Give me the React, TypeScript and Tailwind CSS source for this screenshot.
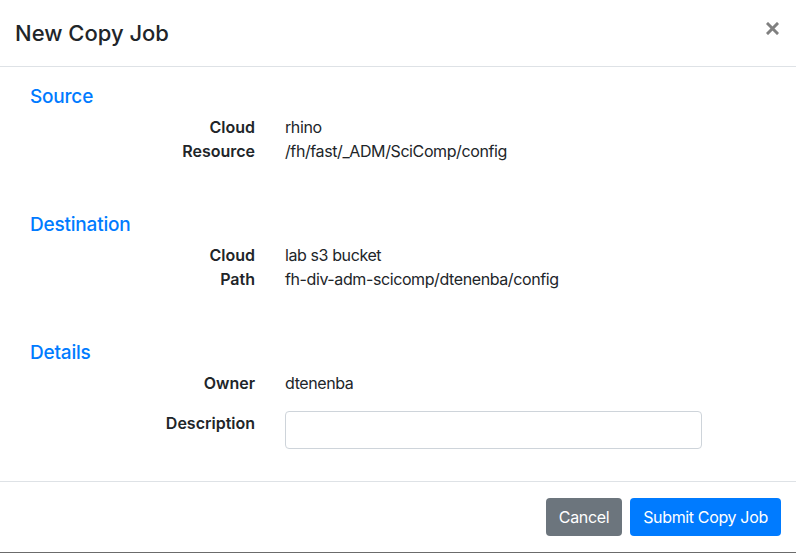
import React from "react";

function Row({ label, value }: { label: string; value: string }) {
  return (
    <div className="flex h-6 items-center">
      <div className="w-[225px] text-right font-semibold">{label}</div>
      <div className="ml-[30px] tracking-[-0.4px]">{value}</div>
    </div>
  );
}

function Heading({ children }: { children: React.ReactNode }) {
  return (
    <h5 className="h-6 pt-[1px] text-[19px] leading-6 font-medium text-[#007bff] tracking-[-0.2px]">{children}</h5>
  );
}

export default function App() {
  return (
    <div
      className="w-[796px] h-[553px] bg-white text-[#212529] text-[16px] leading-6 flex flex-col border-b border-[#6b6b6b]"
      style={{ fontFamily: "Inter, 'Noto Sans', sans-serif" }}
    >
      <div className="h-[67px] shrink-0 flex items-center justify-between pl-[15px] pr-[17px] border-b border-[#dee2e6]">
        <h4 className="text-[22px] font-medium leading-[30px]">New Copy Job</h4>
        <button className="w-[14px] h-[14px] mb-[10px] flex items-center justify-center" aria-label="Close">
          <svg width="13" height="13" viewBox="0 0 13 13">
            <path d="M2 2L11 11M11 2L2 11" stroke="#808080" strokeWidth="3" strokeLinecap="square" />
          </svg>
        </button>
      </div>
      <div className="pl-[30px] pt-[17px] pb-[32px] flex flex-col">
        <Heading>Source</Heading>
        <div className="mt-[7px]">
          <Row label="Cloud" value="rhino" />
          <Row label="Resource" value="/fh/fast/_ADM/SciComp/config" />
        </div>
        <div className="mt-[49px]">
          <Heading>Destination</Heading>
        </div>
        <div className="mt-[7px]">
          <Row label="Cloud" value="lab s3 bucket" />
          <Row label="Path" value="fh-div-adm-scicomp/dtenenba/config" />
        </div>
        <div className="mt-[49px]">
          <Heading>Details</Heading>
        </div>
        <div className="mt-[7px]">
          <Row label="Owner" value="dtenenba" />
        </div>
        <div className="mt-[16px] flex items-start">
          <div className="w-[225px] text-right font-semibold leading-6">Description</div>
          <input
            type="text"
            className="ml-[30px] w-[417px] h-[38px] rounded-[4px] border border-[#ced4da] px-3 outline-none"
          />
        </div>
      </div>
      <div className="flex-1 border-t border-[#dee2e6] flex items-start justify-end pt-[16px] pr-[15px] gap-2">
        <button className="h-[38px] w-[76px] rounded-[4px] bg-[#6c757d] text-white text-[16px] tracking-[-0.35px]">Cancel</button>
        <button className="h-[38px] w-[151px] rounded-[4px] bg-[#007bff] text-white text-[16px] tracking-[-0.35px]">Submit Copy Job</button>
      </div>
    </div>
  );
}
